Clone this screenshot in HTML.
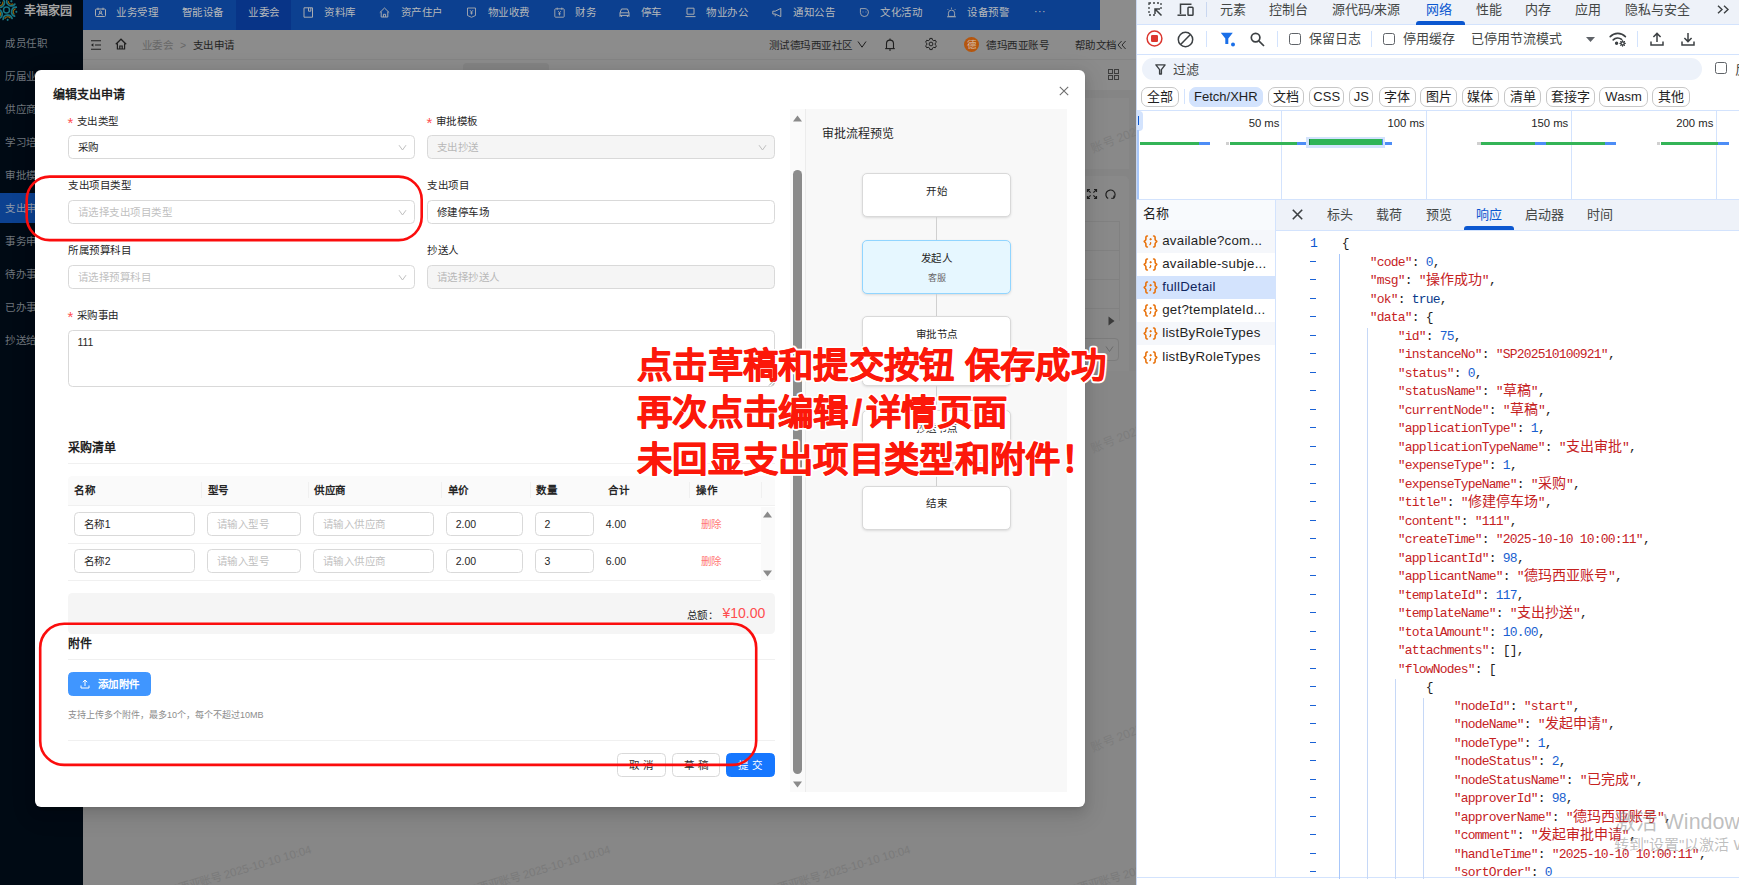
<!DOCTYPE html>
<html lang="zh-CN">
<head>
<meta charset="utf-8">
<title>编辑支出申请</title>
<style>
*{box-sizing:border-box;margin:0;padding:0}
html,body{width:1739px;height:885px;overflow:hidden;background:#878787}
body{position:relative;font-family:"Liberation Sans",sans-serif;font-size:10.5px;color:#262626;line-height:1;letter-spacing:.5px}
.a{position:absolute;white-space:nowrap}
svg{position:absolute;overflow:visible}
/* ---------- page (dimmed by modal mask) ---------- */
#page{position:absolute;left:0;top:0;width:1136px;height:885px;background:#858585;overflow:hidden}
#side{position:absolute;left:0;top:0;width:83px;height:885px;background:#000a14}
#side .mi{position:absolute;left:5px;font-size:10.5px;font-weight:500;color:#8e9398;white-space:nowrap}
#side .act{position:absolute;left:0;top:193px;width:83px;height:30px;background:#0c4190}
#nav{position:absolute;left:83px;top:0;width:1017px;height:30px;background:#0c4090}
#nav .act{position:absolute;left:153px;top:0;width:55px;height:30px;background:#083487}
#nav .t{position:absolute;top:6px;font-size:10.5px;font-weight:500;color:#b6b8ba;white-space:nowrap;line-height:12px}
#crumb{position:absolute;left:83px;top:30px;width:1053px;height:29px;background:#8c8c8c}
#tabs{position:absolute;left:83px;top:60px;width:1053px;height:30px;background:#8b8b8b}
.wm2{position:absolute;white-space:nowrap;font-size:11.5px;letter-spacing:0;color:#7a7a7a;transform:rotate(-16.7deg);transform-origin:right center;line-height:14px}
.wm{position:absolute;letter-spacing:0;white-space:nowrap;font-size:12px;color:#7d7d7d;transform:rotate(-22deg);transform-origin:left center}
/* ---------- modal ---------- */
#modal{position:absolute;left:35px;top:70px;width:1050px;height:737px;background:#fff;border-radius:6px;box-shadow:0 4.5px 12px rgba(0,0,0,.11),0 2.25px 4.5px -3px rgba(0,0,0,.16),0 6.75px 21px 6px rgba(0,0,0,.07)}

#modal .lb{position:absolute;white-space:nowrap;line-height:12px;color:#262626}
#modal .rq{position:absolute;white-space:nowrap;line-height:12px;color:#ff4d4f;font-size:15px;letter-spacing:0;margin-top:1px;margin-left:-0.5px}
.inp{position:absolute;height:24px;border:1px solid #d9d9d9;border-radius:4.5px;background:#fff;white-space:nowrap;line-height:22px;padding-left:8.5px;color:#262626}
.inp.dis{background:#f5f5f5;color:#b8b8b8}
.inp.ph{color:#bfbfbf}
.chev{position:absolute;right:7.5px;top:7px}
.n{letter-spacing:0}
.hr{position:absolute;height:1px;background:#f0f0f0}
.th{position:absolute;top:-1px;line-height:30px;font-weight:bold;color:#262626;white-space:nowrap}
.vs{position:absolute;top:6px;width:1px;height:16px;background:#f0f0f0}
.btn{position:absolute;height:24px;border:1px solid #d9d9d9;border-radius:4.5px;background:#fff;line-height:22px;text-align:center;white-space:nowrap;color:#262626}
.node{position:absolute;left:55.5px;width:149.5px;background:#fff;border:1px solid #d9d9d9;border-radius:5px;text-align:center;box-shadow:0 1px 2.5px rgba(0,0,0,.12);white-space:nowrap}
.conn{position:absolute;left:129.5px;width:1px;background:#d0d0d0}

/* ---------- devtools ---------- */
#dev{position:absolute;left:1136px;top:0;width:603px;height:885px;background:#fff;overflow:hidden;font-size:13px;letter-spacing:0;color:#1f1f1f;border-left:1px solid #c9d7f0}
#dev .t{position:absolute;white-space:nowrap;line-height:16px;color:#444746}
#dev .hl{position:absolute;left:0;width:603px;height:1px;background:#d3e3fd}
#dev .sep{position:absolute;width:1px;height:16px;background:#d3e3fd}
#dev .cb{position:absolute;width:12px;height:12px;border:1px solid #5f6368;border-radius:2.5px;background:#fff}
#dev .pill{position:absolute;top:86.5px;height:20px;border:1px solid #c7c7c7;border-radius:7px;line-height:18px;text-align:center;white-space:nowrap;color:#1f1f1f;background:#fff}
#dev .gl{position:absolute;margin-left:-0.5px;top:111px;width:1px;height:88px;background:#d3e3fd}
#dev .ms{position:absolute;top:115.5px;font-size:11.3px;line-height:15px;white-space:nowrap;text-align:right;width:60px;color:#1f1f1f}
#dev .g{position:absolute;top:142px;height:2.6px;background:#34b457}
#dev .bl{position:absolute;top:142px;height:2.6px;background:#4d8df6}
#dev .gr{position:absolute;top:142px;height:2.6px;background:#d0d0d0}
#dev .row{position:absolute;left:0;width:138px;height:23px}
#dev .row .nm{position:absolute;left:25.2px;top:3px;line-height:16px;font-size:13.3px;letter-spacing:.25px;color:#1f1f1f;white-space:nowrap}
#code{position:absolute;left:140px;top:231.2px;width:463px;height:648px;font-family:"Liberation Mono",monospace;font-size:13px;letter-spacing:-0.8px}
#code .l{position:absolute;white-space:pre;line-height:18.5px;height:18.5px;color:#1f1f1f;margin-left:-1.2px;margin-top:1px}
#code .ln{position:absolute;margin-top:1px;left:33px;color:#0b57d0;white-space:pre;line-height:18.5px}
#code .ds{position:absolute;left:33.2px;width:6px;height:1px;background:#1a62d6}
#code .k{color:#c5221f}
#code .nu{color:#1a5fd0}
#code .bo{color:#0a3a8c}
#code .c{font-size:14px;letter-spacing:0;line-height:0;font-family:"Liberation Mono",monospace}
#code .gd{position:absolute;width:1px;background:#c6d8f7}
</style>
</head>
<body>
<div id="page">
  <div id="side"><div class="act"></div>
<svg style="left:0;top:0" width="30" height="24" viewBox="0 0 30 24" fill="none" stroke-linecap="round"><g transform="translate(6.5,9.9)"><g transform="rotate(83)"><path d="M9.1,4.53A4.6,4.6 0 0 1 9.1,-4.53" stroke="#187582" stroke-width="1.7"/><path d="M8.3,2.6A3.1,3.1 0 0 1 8.3,-2.6" stroke="#93680c" stroke-width="1.1"/><circle cx="10" cy="0" r="1.05" fill="#187582"/></g><g transform="rotate(11)"><path d="M9.1,4.53A4.6,4.6 0 0 1 9.1,-4.53" stroke="#187582" stroke-width="1.7"/><path d="M8.3,2.6A3.1,3.1 0 0 1 8.3,-2.6" stroke="#93680c" stroke-width="1.1"/><circle cx="10" cy="0" r="1.05" fill="#187582"/></g><g transform="rotate(-61)"><path d="M9.1,4.53A4.6,4.6 0 0 1 9.1,-4.53" stroke="#187582" stroke-width="1.7"/><path d="M8.3,2.6A3.1,3.1 0 0 1 8.3,-2.6" stroke="#93680c" stroke-width="1.1"/><circle cx="10" cy="0" r="1.05" fill="#187582"/></g><g transform="rotate(-133)"><path d="M9.1,4.53A4.6,4.6 0 0 1 9.1,-4.53" stroke="#187582" stroke-width="1.7"/><path d="M8.3,2.6A3.1,3.1 0 0 1 8.3,-2.6" stroke="#93680c" stroke-width="1.1"/><circle cx="10" cy="0" r="1.05" fill="#187582"/></g><g transform="rotate(155)"><path d="M9.1,4.53A4.6,4.6 0 0 1 9.1,-4.53" stroke="#187582" stroke-width="1.7"/><path d="M8.3,2.6A3.1,3.1 0 0 1 8.3,-2.6" stroke="#93680c" stroke-width="1.1"/><circle cx="10" cy="0" r="1.05" fill="#187582"/></g><circle r="3" stroke="#187582" stroke-width="1.5"/></g></svg>
<div class="a" style="left:24px;top:4.5px;font-size:12px;line-height:13px;font-weight:bold;color:#a2a2a2;letter-spacing:0">幸福家园</div>
<div class="mi" style="top:37px;line-height:12px;color:#70767d">成员任职</div>
<div class="mi" style="top:70px;line-height:12px;color:#70767d">历届业委会</div>
<div class="mi" style="top:103px;line-height:12px;color:#70767d">供应商管理</div>
<div class="mi" style="top:136px;line-height:12px;color:#70767d">学习培训</div>
<div class="mi" style="top:169px;line-height:12px;color:#70767d">审批模板</div>
<div class="mi" style="top:202px;line-height:12px;color:#8f9aab">支出申请</div>
<div class="mi" style="top:235px;line-height:12px;color:#70767d">事务申请</div>
<div class="mi" style="top:268px;line-height:12px;color:#70767d">待办事项</div>
<div class="mi" style="top:301px;line-height:12px;color:#70767d">已办事项</div>
<div class="mi" style="top:334px;line-height:12px;color:#70767d">抄送给我</div></div>
  <div id="nav"><div class="act"></div>
<svg style="left:12.0px;top:7.0px" width="11" height="11" viewBox="0 0 11 11" fill="none" stroke="#a9acb0" stroke-width="1"><rect x="0.5" y="2" width="10" height="7.5" rx="1"/><path d="M3,0.7V3M8,0.7V3"/><circle cx="5.5" cy="5" r="1.1"/><path d="M3.6,8.2a1.9,1.9 0 0 1 3.8,0"/></svg>
<div class="t" style="left:33.25px">业务受理</div>
<div class="t" style="left:98.75px">智能设备</div>
<div class="t" style="left:165px">业委会</div>
<svg style="left:219.5px;top:6.5px" width="11" height="11" viewBox="0 0 11 11" fill="none" stroke="#a9acb0" stroke-width="1"><path d="M1,0.8H9.5V10.2H1Z"/><path d="M5.5,0.8V4.2H7.8V0.8"/></svg>
<div class="t" style="left:241.25px">资料库</div>
<svg style="left:296.25px;top:6.8px" width="11" height="11" viewBox="0 0 11 11" fill="none" stroke="#a9acb0" stroke-width="1"><path d="M0.8,5.6L5.5,1L10.2,5.6"/><path d="M2.2,4.6V10H8.8V4.6"/><path d="M4.4,10V7.3H6.6V10"/></svg>
<div class="t" style="left:317.5px">资产住户</div>
<svg style="left:382.75px;top:6.8px" width="11" height="11" viewBox="0 0 11 11" fill="none" stroke="#a9acb0" stroke-width="0.9"><path d="M1.5,1H9.5V8.5L5.5,10.3L1.5,8.5Z"/><path d="M4,3.2L5.5,5L7,3.2M5.5,5V7.5M4.2,6H6.8"/></svg>
<div class="t" style="left:404.5px">物业收费</div>
<svg style="left:470.5px;top:6.8px" width="11" height="11" viewBox="0 0 11 11" fill="none" stroke="#a9acb0" stroke-width="0.9"><rect x="0.8" y="1.8" width="9.4" height="8.4" rx="0.8"/><path d="M3.2,0.6V2.8M7.8,0.6V2.8"/><path d="M4.2,4.2L5.5,5.8L6.8,4.2M5.5,5.8V8.4M4.3,6.8H6.7"/></svg>
<div class="t" style="left:492px">财务</div>
<svg style="left:536.0px;top:6.8px" width="11" height="11" viewBox="0 0 11 11" fill="none" stroke="#a9acb0" stroke-width="1"><path d="M1,9.8V5.8L2.5,2H8.5L10,5.8V9.8"/><path d="M1,5.8H10M1,8.4H10"/><path d="M2.6,8.4V10M8.4,8.4V10"/></svg>
<div class="t" style="left:557.5px">停车</div>
<svg style="left:602.0px;top:6.8px" width="11" height="11" viewBox="0 0 11 11" fill="none" stroke="#a9acb0" stroke-width="1"><path d="M2,1.2H9V7.2H2Z"/><path d="M0.5,9.6H10.5"/></svg>
<div class="t" style="left:623.25px">物业办公</div>
<svg style="left:688.5px;top:6.8px" width="11" height="11" viewBox="0 0 11 11" fill="none" stroke="#a9acb0" stroke-width="1"><path d="M0.8,4.2H3.2L8.8,1.4V9.6L3.2,7H0.8Z"/><path d="M3.2,7.2V9.4"/></svg>
<div class="t" style="left:710px">通知公告</div>
<svg style="left:775.75px;top:6.8px" width="11" height="11" viewBox="0 0 11 11" fill="none" stroke="#a9acb0" stroke-width="0.9"><path d="M1.4,1.6H6a4,4 0 1 1 -4.6,4Z"/><path d="M4,4.6V5.4M7,4.6V5.4"/></svg>
<div class="t" style="left:797px">文化活动</div>
<svg style="left:862.5px;top:6.8px" width="11" height="11" viewBox="0 0 11 11" fill="none" stroke="#a9acb0" stroke-width="0.9"><path d="M2.4,9.4V6.2a3.1,3.1 0 0 1 6.2,0V9.4Z"/><path d="M1,9.8H10"/><path d="M5.5,0.6V1.8M1.6,2.2L2.5,3.1M9.4,2.2L8.5,3.1"/></svg>
<div class="t" style="left:884px">设备预警</div>
<div class="t" style="left:951px;top:5px;letter-spacing:0.5px">···</div></div>
  <div class="a" style="left:1100px;top:0;width:36px;height:30px;background:#8c8c8c"></div>
<div id="crumb"><svg style="left:7.0px;top:8.5px" width="12" height="12" viewBox="0 0 12 12" fill="none" stroke="#1f1f1f" stroke-width="1.1"><path d="M1,1.8H11M5,6H11M1,10.2H11"/><path d="M3.4,4.2L1,6L3.4,7.8Z" fill="#1f1f1f" stroke="none"/></svg>
<svg style="left:32.0px;top:8.2px" width="12" height="12" viewBox="0 0 12 12" fill="none" stroke="#1f1f1f" stroke-width="1.2"><path d="M0.8,6.2L6,1.2L11.2,6.2"/><path d="M2.4,5.2V11H9.6V5.2"/><path d="M4.8,11V8H7.2V11"/></svg>
<div class="a" style="left:58.75px;top:8.5px;line-height:12px;color:#676767">业委会</div>
<div class="a" style="left:97px;top:8.5px;line-height:12px;color:#676767">&gt;</div>
<div class="a" style="left:109.5px;top:8.5px;line-height:12px;color:#1f1f1f">支出申请</div>
<div class="a" style="left:685.75px;top:8.5px;line-height:12px;color:#262626">测试德玛西亚社区</div>
<svg style="left:773.5px;top:9.2px" width="10" height="10" viewBox="0 0 10 10" fill="none" stroke="#1f1f1f" stroke-width="1"><path d="M1,2.5L5,8.2L9,2.5"/></svg>
<svg style="left:801px;top:7.600000000000001px" width="12" height="13" viewBox="0 0 12 13" fill="none" stroke="#1f1f1f" stroke-width="1.1"><path d="M2.5,10.4V5.6a3.5,3.5 0 0 1 7,0V10.4"/><path d="M1.2,10.6H10.8"/><path d="M5,12H7"/><path d="M6,0.6V2.1"/></svg>
<svg style="left:842.4px;top:8.100000000000001px" width="12" height="12" viewBox="0 0 12 12" fill="none" stroke="#1f1f1f" stroke-width="1"><path d="M11.40,7.81L10.27,9.77L8.79,9.27L7.43,10.05L7.13,11.59L4.87,11.59L4.57,10.05L3.21,9.27L1.73,9.77L0.60,7.81L1.77,6.79L1.77,5.21L0.60,4.19L1.73,2.23L3.21,2.73L4.57,1.95L4.87,0.41L7.13,0.41L7.43,1.95L8.79,2.73L10.27,2.23L11.40,4.19L10.23,5.21L10.23,6.79Z" stroke-linejoin="round"/><circle cx="6" cy="6" r="1.9"/></svg>
<div class="a" style="left:881px;top:7px;width:15px;height:15px;border-radius:50%;background:#b5560e"></div>
<div class="a" style="left:883.8px;top:9.8px;font-size:9.5px;line-height:10px;letter-spacing:0;color:#d6bfaa">德</div>
<div class="a" style="left:903.25px;top:8.5px;line-height:12px;color:#262626">德玛西亚账号</div>
<div class="a" style="left:991.5px;top:8.5px;line-height:12px;color:#262626">帮助文档</div>
<svg style="left:1034.0px;top:9.5px" width="10" height="10" viewBox="0 0 10 10" fill="none" stroke="#1f1f1f" stroke-width="0.9"><path d="M4.6,1L1,5L4.6,9M8.6,1L5,5L8.6,9"/></svg></div>
  <div id="tabs"></div>
<div class="a" style="left:83px;top:59px;width:1053px;height:1px;background:#848484"></div>
<div class="a" style="left:463px;top:63px;width:86px;height:24px;background:#838383;border-radius:4px 4px 0 0"></div>
<svg style="left:1108px;top:69px" width="11" height="11" viewBox="0 0 11 11" fill="none" stroke="#3c3c3c" stroke-width="1"><rect x="0.5" y="0.5" width="4" height="4"/><rect x="6.5" y="0.5" width="4" height="4"/><rect x="0.5" y="6.5" width="4" height="4"/><rect x="6.5" y="6.5" width="4" height="4"/></svg>
<div class="a" style="left:92px;top:98px;width:1037px;height:71px;background:#898989"></div>
<div class="a" style="left:92px;top:176px;width:1037px;height:620px;background:#898989;border-radius:5px"></div>

<svg style="left:1087px;top:189px" width="10" height="10" viewBox="0 0 10 10" fill="none" stroke="#1f1f1f" stroke-width="1.2"><path d="M0.5,3V0.5H3M7,0.5H9.5V3M9.5,7V9.5H7M3,9.5H0.5V7M0.8,0.8L3.6,3.6M9.2,0.8L6.4,3.6M9.2,9.2L6.4,6.4M0.8,9.2L3.6,6.4"/></svg>
<svg style="left:1104.5px;top:188.5px" width="11" height="11" viewBox="0 0 11 11" fill="none" stroke="#1f1f1f" stroke-width="1.2"><path d="M3.2,9.6A4.6,4.6 0 1 1 8.6,9"/><path d="M8.9,6.6V9.3H6.2" stroke-width="1"/></svg>
<div class="a" style="left:100px;top:220.5px;width:1020px;height:100px;border:1px solid #818181;border-bottom:none"></div>
<div class="a" style="left:100px;top:249.5px;width:1020px;height:1px;background:#818181"></div>
<div class="a" style="left:100px;top:279px;width:1020px;height:1px;background:#818181"></div>
<div class="a" style="left:100px;top:308px;width:1020px;height:1px;background:#818181"></div>
<svg style="left:1108px;top:316px" width="7" height="10" viewBox="0 0 7 10"><path d="M0.5,0.5L6.5,5L0.5,9.5Z" fill="#3a3a3a"/></svg>
<div class="a" style="left:1040px;top:337.5px;width:79px;height:23px;border:1px solid #7c7c7c;border-radius:4px;background:#8a8a8a"></div>
<svg style="left:1105px;top:345px" width="9" height="8" viewBox="0 0 9 8" fill="none" stroke="#6c6c6c" stroke-width="1"><path d="M1,1.5L4.5,6.5L8,1.5"/></svg>
<div class="a" style="left:83px;top:371px;width:1053px;height:520px;background:#878787"></div>
<div class="wm" style="left:1092px;top:143px">账号 2025-10-10</div>
<div class="wm" style="left:1092px;top:443px">账号 2025-10-10</div>
<div class="wm" style="left:1092px;top:742px">账号 2025-10-10</div>
<div class="wm2" style="right:825px;top:842px">玛西亚账号 2025-10-10 10:04</div>
<div class="wm2" style="right:526px;top:842px">玛西亚账号 2025-10-10 10:04</div>
<div class="wm2" style="right:226px;top:842px">玛西亚账号 2025-10-10 10:04</div>
<div class="wm2" style="right:-74px;top:842px">玛西亚账号 2025-10-10 10:04</div>
</div>
<div id="modal">
<div class="a" style="left:18px;top:18px;font-size:12px;line-height:14px;font-weight:bold;color:#1f1f1f;letter-spacing:0">编辑支出申请</div>
<svg style="left:1024px;top:15.9px" width="10" height="10" viewBox="0 0 10 10" stroke="#6e6e6e" stroke-width="1.1" fill="none"><path d="M0.8,0.8L9.2,9.2M9.2,0.8L0.8,9.2"/></svg>
<div class="rq" style="left:33px;top:46px">*</div>
<div class="lb" style="left:41.75px;top:45px">支出类型</div>
<div class="rq" style="left:392px;top:46px">*</div>
<div class="lb" style="left:400.75px;top:45px">审批模板</div>
<div class="inp " style="left:33px;top:65px;width:347px;height:24px;">采购<svg class="chev" width="9" height="9" viewBox="0 0 9 9" fill="none" stroke="#bfbfbf" stroke-width="1"><path d="M1,2.2L4.5,7L8,2.2"/></svg></div>
<div class="inp dis" style="left:392px;top:65px;width:348px;height:24px;">支出抄送<svg class="chev" width="9" height="9" viewBox="0 0 9 9" fill="none" stroke="#bfbfbf" stroke-width="1"><path d="M1,2.2L4.5,7L8,2.2"/></svg></div>
<div class="lb" style="left:33px;top:109px">支出项目类型</div>
<div class="lb" style="left:392px;top:109px">支出项目</div>
<div class="inp ph" style="left:33px;top:130px;width:347px;height:24px;">请选择支出项目类型<svg class="chev" width="9" height="9" viewBox="0 0 9 9" fill="none" stroke="#bfbfbf" stroke-width="1"><path d="M1,2.2L4.5,7L8,2.2"/></svg></div>
<div class="inp " style="left:392px;top:130px;width:348px;height:24px;">修建停车场</div>
<div class="lb" style="left:33px;top:174px">所属预算科目</div>
<div class="lb" style="left:392px;top:174px">抄送人</div>
<div class="inp ph" style="left:33px;top:195px;width:347px;height:24px;">请选择预算科目<svg class="chev" width="9" height="9" viewBox="0 0 9 9" fill="none" stroke="#bfbfbf" stroke-width="1"><path d="M1,2.2L4.5,7L8,2.2"/></svg></div>
<div class="inp dis" style="left:392px;top:195px;width:348px;height:24px;">请选择抄送人</div>
<div class="rq" style="left:33px;top:240px">*</div>
<div class="lb" style="left:41.75px;top:239px">采购事由</div>
<div class="inp " style="left:33px;top:260px;width:707px;height:57px;"><span class="n">111</span></div>
<div class="a" style="left:33px;top:370.5px;font-size:12px;line-height:14px;color:#1f1f1f;letter-spacing:0;font-weight:600">采购清单</div>
<div class="hr" style="left:33px;top:393px;width:707px"></div>
<div class="a" style="left:33px;top:406px;width:707px;height:104px"><div class="a" style="left:0;top:0;width:707px;height:29px;background:#fafafa;border-radius:4.5px 4.5px 0 0"></div><div class="th" style="left:6.25px">名称</div><div class="th" style="left:139.5px">型号</div><div class="th" style="left:246.25px">供应商</div><div class="th" style="left:379.5px">单价</div><div class="th" style="left:468.25px">数量</div><div class="th" style="left:540px">合计</div><div class="th" style="left:628.25px">操作</div><div class="vs" style="left:132.5px"></div><div class="vs" style="left:239.5px"></div><div class="vs" style="left:372.5px"></div><div class="vs" style="left:461.5px"></div><div class="vs" style="left:621.25px"></div><div class="vs" style="left:693.25px"></div><div class="hr" style="left:0;top:29px;width:707px"></div><div class="a" style="left:692.5px;top:30.5px;width:14.5px;height:73.5px;background:#fafafa"></div><div class="inp " style="left:6.25px;top:36px;width:120.5px">名称<span class="n">1</span></div><div class="inp ph" style="left:139px;top:36px;width:93.5px">请输入型号</div><div class="inp ph" style="left:245px;top:36px;width:120.5px">请输入供应商</div><div class="inp " style="left:378.25px;top:36px;width:76.5px"><span class="n">2.00</span></div><div class="inp " style="left:467px;top:36px;width:59px"><span class="n">2</span></div><div class="a n" style="left:537.75px;top:42px;line-height:12px">4.00</div><div class="a" style="left:632.75px;top:42px;line-height:12px;color:#ff7875">删除</div><div class="hr" style="left:0;top:66.5px;width:692.5px"></div><div class="inp " style="left:6.25px;top:73px;width:120.5px">名称<span class="n">2</span></div><div class="inp ph" style="left:139px;top:73px;width:93.5px">请输入型号</div><div class="inp ph" style="left:245px;top:73px;width:120.5px">请输入供应商</div><div class="inp " style="left:378.25px;top:73px;width:76.5px"><span class="n">2.00</span></div><div class="inp " style="left:467px;top:73px;width:59px"><span class="n">3</span></div><div class="a n" style="left:537.75px;top:79px;line-height:12px">6.00</div><div class="a" style="left:632.75px;top:79px;line-height:12px;color:#ff7875">删除</div><div class="hr" style="left:0;top:103.5px;width:692.5px"></div><svg style="left:694.75px;top:35.0px" width="9" height="7" viewBox="0 0 9 7"><path d="M4.5,0.5L9,6.5H0Z" fill="#8a8a8a"/></svg><svg style="left:694.75px;top:93.75px" width="9" height="7" viewBox="0 0 9 7"><path d="M4.5,6.5L9,0.5H0Z" fill="#8a8a8a"/></svg></div>
<div class="a" style="left:33px;top:523px;width:707px;height:40.5px;background:#f5f5f5;border-radius:4.5px"></div>
<div class="a" style="left:651.75px;top:538.5px;line-height:12px">总额：</div>
<div class="a n" style="left:687.5px;top:536px;font-size:14px;line-height:15px;color:#ff4d4f">¥10.00</div>
<div class="a" style="left:33px;top:566.5px;font-size:12px;line-height:14px;color:#1f1f1f;letter-spacing:0;font-weight:600">附件</div>
<div class="hr" style="left:33px;top:589px;width:707px"></div>
<div class="btn" style="left:33px;top:602px;width:83px;background:#4096ff;border-color:#4096ff;color:#fff;text-align:left;padding-left:28.5px;font-weight:bold">添加附件<svg style="left:11px;top:6px" width="10" height="10" viewBox="0 0 10 10" fill="none" stroke="#fff" stroke-width="1"><path d="M5,7V1.2M2.8,3.2L5,1L7.2,3.2M1,6.5V9H9V6.5"/></svg></div>
<div class="a" style="left:33px;top:640px;font-size:9px;line-height:11px;color:#8c8c8c;letter-spacing:0">支持上传多个附件，最多<span class="n">10</span>个，每个不超过<span class="n">10MB</span></div>
<div class="hr" style="left:33px;top:670px;width:707px"></div>
<div class="btn" style="left:582px;top:683px;width:49px">取 消</div>
<div class="btn" style="left:637px;top:683px;width:48px">草 稿</div>
<div class="btn" style="left:690.75px;top:683px;width:49.25px;background:#1677ff;border-color:#1677ff;color:#fff">提 交</div>
<div class="a" style="left:755px;top:39px;width:15px;height:682.5px;background:#fafafa"></div>
<svg style="left:757.9px;top:44.5px" width="9" height="7" viewBox="0 0 9 7"><path d="M4.5,0.5L9,6.5H0Z" fill="#8a8a8a"/></svg>
<svg style="left:757.9px;top:710.75px" width="9" height="7" viewBox="0 0 9 7"><path d="M4.5,6.5L9,0.5H0Z" fill="#8a8a8a"/></svg>
<div class="a" style="left:758px;top:100px;width:9px;height:604px;background:#8b8b8b;border-radius:4.5px"></div>
<div class="a" style="left:770px;top:39px;width:262px;height:682.5px;background:#f8f8f8;border-left:1px solid #ececec"><div class="a" style="left:16px;top:17.5px;font-size:12px;line-height:14px;color:#262626;letter-spacing:0">审批流程预览</div><div class="node" style="top:64.3px;height:44.1px;"><div class="a" style="left:0;width:148px;text-align:center;top:10.9px;line-height:12px;font-size:10.5px;color:#262626;">开始</div></div><div class="conn" style="top:108.4px;height:23px"></div><div class="node" style="top:131.4px;height:53.2px;background:#e6f7ff;border-color:#91d5ff;"><div class="a" style="left:0;width:148px;text-align:center;top:10.6px;line-height:12px;font-size:10.5px;color:#262626;">发起人</div><div class="a" style="left:0;width:148px;text-align:center;top:30.6px;line-height:12px;font-size:9px;color:#666;letter-spacing:0;">客服</div></div><div class="conn" style="top:184.6px;height:23px"></div><div class="node" style="top:207.2px;height:69.4px;"><div class="a" style="left:0;width:148px;text-align:center;top:10.6px;line-height:12px;font-size:10.5px;color:#262626;">审批节点</div></div><div class="conn" style="top:276.6px;height:24px"></div><div class="node" style="top:300.6px;height:53.4px;"><div class="a" style="left:0;width:148px;text-align:center;top:11.8px;line-height:12px;font-size:10.5px;color:#262626;">抄送节点</div></div><div class="conn" style="top:354px;height:23px"></div><div class="node" style="top:376.5px;height:44.2px;"><div class="a" style="left:0;width:148px;text-align:center;top:10.6px;line-height:12px;font-size:10.5px;color:#262626;">结束</div></div></div>
</div>
<svg id="anno" style="left:0;top:0" width="1739" height="885" viewBox="0 0 1739 885">
<rect x="26.7" y="176.6" width="395" height="63.5" rx="23" ry="23" fill="none" stroke="#fb0d0d" stroke-width="2.6"/>
<rect x="40.2" y="623.7" width="716" height="141.2" rx="24" ry="24" fill="none" stroke="#fb0d0d" stroke-width="2.6"/>
<g font-family="'Liberation Sans',sans-serif" font-weight="bold" font-size="35.4" letter-spacing="0.3" stroke-linejoin="round">
<g fill="#fff" stroke="#fff" stroke-width="4.4"><text x="637" y="378.4">点击草稿和提交按钮 保存成功</text><text x="637" y="425.4">再次点击编辑<tspan dx="3.5">/</tspan><tspan dx="3.5">详情页面</tspan></text><text x="637" y="472.4">未回显支出项目类型和附件！</text></g>
<g fill="#fc180a" stroke="#fc180a" stroke-width="0.8"><text x="637" y="378.4">点击草稿和提交按钮 保存成功</text><text x="637" y="425.4">再次点击编辑<tspan dx="3.5">/</tspan><tspan dx="3.5">详情页面</tspan></text><text x="637" y="472.4">未回显支出项目类型和附件！</text></g>
</g>
</svg>
<svg style="left:768px;top:379px" width="7" height="7" viewBox="0 0 7 7" stroke="#8a8a8a" stroke-width="0.8" fill="none"><path d="M6.5,1L1,6.5M6.5,4L4,6.5"/></svg>
<div id="dev">
<div class="a" style="left:0;top:0;width:603px;height:24px;background:#eef2f9"></div>
<div class="hl" style="top:24px"></div>
<svg style="left:10.5px;top:1.5px" width="15" height="15" viewBox="0 0 15 15" fill="none" stroke="#3c4043" stroke-width="1.4"><path d="M1,3V1H3M5,1H7M9,1H11M13,1V3M13,5V7M1,5V7M1,9V11M1,13H3M5,13H7" stroke-width="1.3"/><path d="M13.5,13.5L7,7M7,12V7H12" stroke-width="1.5"/></svg>
<svg style="left:40px;top:1.5px" width="17" height="15" viewBox="0 0 17 15" fill="none" stroke="#3c4043" stroke-width="1.5"><path d="M3.5,12V2.2H14.5"/><path d="M0.5,13.2H9"/><rect x="11" y="5.2" width="5" height="8" rx="0.8"/></svg>
<div class="sep" style="left:68.5px;top:2px;height:15px;background:#c9d7f0"></div>
<div class="t" style="left:82.6px;top:1.5px">元素</div>
<div class="t" style="left:131.9px;top:1.5px">控制台</div>
<div class="t" style="left:194.8px;top:1.5px">源代码/来源</div>
<div class="t" style="left:289.2px;top:1.5px;color:#0b57d0">网络</div>
<div class="t" style="left:339px;top:1.5px">性能</div>
<div class="t" style="left:388.4px;top:1.5px">内存</div>
<div class="t" style="left:437.9px;top:1.5px">应用</div>
<div class="t" style="left:487.7px;top:1.5px">隐私与安全</div>
<div class="a" style="left:278.7px;top:21px;width:49px;height:3.5px;background:#0b57d0;border-radius:3px 3px 0 0"></div>
<svg style="left:579.5px;top:4.5px" width="12" height="9" viewBox="0 0 12 9" fill="none" stroke="#3c4043" stroke-width="1.4"><path d="M1,0.7L5,4.5L1,8.3M7,0.7L11,4.5L7,8.3"/></svg>
<div class="hl" style="top:54px"></div>
<svg style="left:9.4px;top:30.3px" width="17" height="17" viewBox="0 0 17 17"><circle cx="8.5" cy="8.5" r="7.4" fill="none" stroke="#dc362e" stroke-width="1.5"/><rect x="5" y="5" width="7" height="7" rx="1.2" fill="#dc362e"/></svg>
<svg style="left:39.7px;top:30.5px" width="17" height="17" viewBox="0 0 17 17" fill="none" stroke="#3c4043" stroke-width="1.5"><circle cx="8.5" cy="8.5" r="7.2"/><path d="M3.6,13.6L13.4,3.4"/></svg>
<div class="sep" style="left:68.5px;top:31px"></div>
<svg style="left:82.5px;top:32px" width="17" height="15" viewBox="0 0 17 15"><path d="M0.8,0.8H12.8L8.3,6.6V12H5.3V6.6Z" fill="#1a6fe8"/><circle cx="13" cy="12.6" r="2" fill="#1a6fe8"/></svg>
<svg style="left:112.5px;top:32px" width="15" height="15" viewBox="0 0 15 15" fill="none" stroke="#3c4043" stroke-width="1.7"><circle cx="5.6" cy="5.6" r="4.3"/><path d="M8.8,8.8L14,14"/></svg>
<div class="sep" style="left:140.3px;top:31px"></div>
<div class="cb" style="left:152px;top:33px"></div>
<div class="t" style="left:172px;top:30.5px">保留日志</div>
<div class="sep" style="left:234px;top:31px"></div>
<div class="cb" style="left:245.5px;top:33px"></div>
<div class="t" style="left:266px;top:30.5px">停用缓存</div>
<div class="t" style="left:333.8px;top:30.5px">已停用节流模式</div>
<svg style="left:448.7px;top:36.5px" width="9" height="5" viewBox="0 0 9 5"><path d="M0,0H9L4.5,5Z" fill="#5f6368"/></svg>
<svg style="left:471.5px;top:30.5px" width="18" height="16" viewBox="0 0 18 16" fill="none" stroke="#3c4043" stroke-width="1.6" stroke-linecap="round"><path d="M1.2,5.6A10.5,10.5 0 0 1 16.4,5.6"/><path d="M4.2,8.9A6.4,6.4 0 0 1 12.6,8.4"/><circle cx="7.6" cy="12.2" r="0.9" fill="#3c4043"/><circle cx="13.6" cy="12.4" r="1.6" stroke-width="1.3"/><path d="M13.6,9.6V10.4M13.6,14.4V15.2M10.9,12.4H11.6M15.6,12.4H16.3M11.7,10.5L12.2,11M15,13.8L15.5,14.3M11.7,14.3L12.2,13.8M15,11L15.5,10.5" stroke-width="1.1"/></svg>
<div class="sep" style="left:499.6px;top:31px"></div>
<svg style="left:513px;top:32px" width="14" height="14" viewBox="0 0 14 14" fill="none" stroke="#3c4043" stroke-width="1.5"><path d="M7,10V1.5M3.4,5L7,1.4L10.6,5M1,9.6V13H13V9.6"/></svg>
<svg style="left:544px;top:32px" width="14" height="14" viewBox="0 0 14 14" fill="none" stroke="#3c4043" stroke-width="1.5"><path d="M7,1V9.5M3.4,6L7,9.6L10.6,6M1,9.6V13H13V9.6"/></svg>
<div class="a" style="left:5px;top:58px;width:560px;height:22px;border-radius:11px;background:#edf2fa"></div>
<svg style="left:17.5px;top:63.5px" width="11" height="11" viewBox="0 0 11 11" fill="none" stroke="#3c4043" stroke-width="1.4"><path d="M0.9,0.9H10.1L6.4,5.6V10H4.6V5.6Z" stroke-linejoin="round"/></svg>
<div class="t" style="left:36px;top:61.5px">过滤</div>
<div class="cb" style="left:577.7px;top:62px"></div>
<div class="t" style="left:597.8px;top:61.5px">反转</div>
<div class="pill" style="left:4.2px;width:37.6px;">全部</div>
<div class="pill" style="left:52px;width:73.7px;background:#d3e3fd;border-color:#d3e3fd;">Fetch/XHR</div>
<div class="pill" style="left:131.3px;width:35.9px;">文档</div>
<div class="pill" style="left:172px;width:35.4px;">CSS</div>
<div class="pill" style="left:212.3px;width:24.1px;">JS</div>
<div class="pill" style="left:241.5px;width:37.2px;">字体</div>
<div class="pill" style="left:283.4px;width:36.5px;">图片</div>
<div class="pill" style="left:325.1px;width:36.7px;">媒体</div>
<div class="pill" style="left:367.4px;width:36.4px;">清单</div>
<div class="pill" style="left:408.5px;width:49.5px;">套接字</div>
<div class="pill" style="left:462.3px;width:48.5px;">Wasm</div>
<div class="pill" style="left:515.3px;width:37.4px;">其他</div>
<div class="sep" style="left:46.5px;top:89px;height:15px"></div>
<div class="hl" style="top:110px"></div>
<div class="gl" style="left:144.5px"></div>
<div class="gl" style="left:289.6px"></div>
<div class="gl" style="left:434px"></div>
<div class="gl" style="left:579.5px"></div>
<div class="ms" style="left:82.4px">50 ms</div>
<div class="ms" style="left:227.5px">100 ms</div>
<div class="ms" style="left:371.2px">150 ms</div>
<div class="ms" style="left:516.3px">200 ms</div>
<div class="a" style="left:0;top:111px;width:5.5px;height:19.5px;background:#d3e3fd;border-radius:0 4px 4px 0"></div>
<div class="a" style="left:0.8px;top:116px;width:1.4px;height:9px;background:#0b57d0"></div>
<div class="a" style="left:0px;top:130px;width:1.5px;height:69px;background:#a8c7fa"></div>
<div class="g" style="left:2.8px;width:59.5px"></div>
<div class="bl" style="left:62.3px;width:11.0px"></div>
<div class="gr" style="left:89.4px;width:3.1px"></div>
<div class="g" style="left:92.5px;width:67.7px"></div>
<div class="bl" style="left:160.2px;width:8.8px"></div>
<div class="a" style="left:169px;top:137px;width:79px;height:10.5px;background:#d3e3fd"></div>
<div class="a" style="left:172px;top:138.7px;width:73.5px;height:6.3px;background:#2fb457;border-left:1.2px solid #1f7a4a;border-right:1.2px solid #4d8df6"></div>
<div class="bl" style="left:248.1px;width:7.0px"></div>
<div class="gr" style="left:340.3px;width:3.5px"></div>
<div class="g" style="left:343.8px;width:54.2px"></div>
<div class="bl" style="left:398px;width:11px"></div>
<div class="g" style="left:409px;width:59px"></div>
<div class="bl" style="left:468px;width:11px"></div>
<div class="gr" style="left:520.4px;width:3.1px"></div>
<div class="g" style="left:523.5px;width:57.4px"></div>
<div class="bl" style="left:580.9px;width:11.1px"></div>
<div class="hl" style="top:199px"></div>
<div class="a" style="left:0;top:200px;width:139px;height:29.5px;background:#f8fafd"></div>
<div class="a" style="left:139px;top:200px;width:464px;height:29.5px;background:#eef2f9"></div>
<div class="hl" style="top:229.5px"></div>
<div class="a" style="left:138px;top:200px;width:1px;height:685px;background:#d3e3fd"></div>
<div class="t" style="left:5.6px;top:205.5px;color:#1f1f1f">名称</div>
<svg style="left:155.4px;top:209px" width="11" height="11" viewBox="0 0 11 11" fill="none" stroke="#3c4043" stroke-width="1.6"><path d="M0.8,0.8L10.2,10.2M10.2,0.8L0.8,10.2"/></svg>
<div class="t" style="left:189.9px;top:207px">标头</div>
<div class="t" style="left:238.9px;top:207px">载荷</div>
<div class="t" style="left:289.2px;top:207px">预览</div>
<div class="t" style="left:338.6px;top:207px;color:#0b57d0">响应</div>
<div class="t" style="left:388px;top:207px">启动器</div>
<div class="t" style="left:450.4px;top:207px">时间</div>
<div class="a" style="left:327.4px;top:226px;width:49.3px;height:3.5px;background:#0b57d0;border-radius:3px 3px 0 0"></div>
<div class="row" style="top:230.0px;background:#f5f7fb"><svg style="left:6px;top:5px" width="15" height="13" viewBox="0 0 15 13" fill="none" stroke="#e8710a" stroke-width="1.6" stroke-linecap="round"><path d="M4.4,1C2.6,1 2.9,2.6 2.9,4.2C2.9,5.6 1.2,6 1.2,6.5C1.2,7 2.9,7.4 2.9,8.8C2.9,10.4 2.6,12 4.4,12"/><path d="M10.6,1C12.4,1 12.1,2.6 12.1,4.2C12.1,5.6 13.8,6 13.8,6.5C13.8,7 12.1,7.4 12.1,8.8C12.1,10.4 12.4,12 10.6,12"/><circle cx="7.5" cy="4.2" r="0.7" fill="#e8710a" stroke-width="0.8"/><path d="M7.6,7.6V8.6L6.9,9.6" stroke-width="1.3"/></svg><div class="nm">available?com...</div></div>
<div class="row" style="top:253.1px;background:#fff"><svg style="left:6px;top:5px" width="15" height="13" viewBox="0 0 15 13" fill="none" stroke="#e8710a" stroke-width="1.6" stroke-linecap="round"><path d="M4.4,1C2.6,1 2.9,2.6 2.9,4.2C2.9,5.6 1.2,6 1.2,6.5C1.2,7 2.9,7.4 2.9,8.8C2.9,10.4 2.6,12 4.4,12"/><path d="M10.6,1C12.4,1 12.1,2.6 12.1,4.2C12.1,5.6 13.8,6 13.8,6.5C13.8,7 12.1,7.4 12.1,8.8C12.1,10.4 12.4,12 10.6,12"/><circle cx="7.5" cy="4.2" r="0.7" fill="#e8710a" stroke-width="0.8"/><path d="M7.6,7.6V8.6L6.9,9.6" stroke-width="1.3"/></svg><div class="nm">available-subje...</div></div>
<div class="row" style="top:276.2px;background:#d3e3fd"><svg style="left:6px;top:5px" width="15" height="13" viewBox="0 0 15 13" fill="none" stroke="#e8710a" stroke-width="1.6" stroke-linecap="round"><path d="M4.4,1C2.6,1 2.9,2.6 2.9,4.2C2.9,5.6 1.2,6 1.2,6.5C1.2,7 2.9,7.4 2.9,8.8C2.9,10.4 2.6,12 4.4,12"/><path d="M10.6,1C12.4,1 12.1,2.6 12.1,4.2C12.1,5.6 13.8,6 13.8,6.5C13.8,7 12.1,7.4 12.1,8.8C12.1,10.4 12.4,12 10.6,12"/><circle cx="7.5" cy="4.2" r="0.7" fill="#e8710a" stroke-width="0.8"/><path d="M7.6,7.6V8.6L6.9,9.6" stroke-width="1.3"/></svg><div class="nm" style="color:#10265e">fullDetail</div></div>
<div class="row" style="top:299.3px;background:#fff"><svg style="left:6px;top:5px" width="15" height="13" viewBox="0 0 15 13" fill="none" stroke="#e8710a" stroke-width="1.6" stroke-linecap="round"><path d="M4.4,1C2.6,1 2.9,2.6 2.9,4.2C2.9,5.6 1.2,6 1.2,6.5C1.2,7 2.9,7.4 2.9,8.8C2.9,10.4 2.6,12 4.4,12"/><path d="M10.6,1C12.4,1 12.1,2.6 12.1,4.2C12.1,5.6 13.8,6 13.8,6.5C13.8,7 12.1,7.4 12.1,8.8C12.1,10.4 12.4,12 10.6,12"/><circle cx="7.5" cy="4.2" r="0.7" fill="#e8710a" stroke-width="0.8"/><path d="M7.6,7.6V8.6L6.9,9.6" stroke-width="1.3"/></svg><div class="nm">get?templateId...</div></div>
<div class="row" style="top:322.4px;background:#f5f7fb"><svg style="left:6px;top:5px" width="15" height="13" viewBox="0 0 15 13" fill="none" stroke="#e8710a" stroke-width="1.6" stroke-linecap="round"><path d="M4.4,1C2.6,1 2.9,2.6 2.9,4.2C2.9,5.6 1.2,6 1.2,6.5C1.2,7 2.9,7.4 2.9,8.8C2.9,10.4 2.6,12 4.4,12"/><path d="M10.6,1C12.4,1 12.1,2.6 12.1,4.2C12.1,5.6 13.8,6 13.8,6.5C13.8,7 12.1,7.4 12.1,8.8C12.1,10.4 12.4,12 10.6,12"/><circle cx="7.5" cy="4.2" r="0.7" fill="#e8710a" stroke-width="0.8"/><path d="M7.6,7.6V8.6L6.9,9.6" stroke-width="1.3"/></svg><div class="nm">listByRoleTypes</div></div>
<div class="row" style="top:345.5px;background:#fff"><svg style="left:6px;top:5px" width="15" height="13" viewBox="0 0 15 13" fill="none" stroke="#e8710a" stroke-width="1.6" stroke-linecap="round"><path d="M4.4,1C2.6,1 2.9,2.6 2.9,4.2C2.9,5.6 1.2,6 1.2,6.5C1.2,7 2.9,7.4 2.9,8.8C2.9,10.4 2.6,12 4.4,12"/><path d="M10.6,1C12.4,1 12.1,2.6 12.1,4.2C12.1,5.6 13.8,6 13.8,6.5C13.8,7 12.1,7.4 12.1,8.8C12.1,10.4 12.4,12 10.6,12"/><circle cx="7.5" cy="4.2" r="0.7" fill="#e8710a" stroke-width="0.8"/><path d="M7.6,7.6V8.6L6.9,9.6" stroke-width="1.3"/></svg><div class="nm">listByRoleTypes</div></div>
<div class="hl" style="top:876.7px"></div>
<div class="a" style="left:0;top:877.7px;width:603px;height:8px;background:#fff"></div>
<div id="code">
<div class="ln" style="top:3.25px">1</div><div class="l" style="left:66px;top:3.25px">{</div>
<div class="ds" style="top:29.8px"></div><div class="l" style="left:94px;top:21.75px"><span class="k">"code"</span>: <span class="nu">0</span>,</div>
<div class="ds" style="top:47.8px"></div><div class="l" style="left:94px;top:40.25px"><span class="k">"msg"</span>: <span class="k">"<span class="c">操作成功</span>"</span>,</div>
<div class="ds" style="top:66.8px"></div><div class="l" style="left:94px;top:58.75px"><span class="k">"ok"</span>: <span class="bo">true</span>,</div>
<div class="ds" style="top:84.8px"></div><div class="l" style="left:94px;top:77.25px"><span class="k">"data"</span>: {</div>
<div class="ds" style="top:103.8px"></div><div class="l" style="left:122px;top:95.75px"><span class="k">"id"</span>: <span class="nu">75</span>,</div>
<div class="ds" style="top:121.8px"></div><div class="l" style="left:122px;top:114.25px"><span class="k">"instanceNo"</span>: <span class="k">"SP202510100921"</span>,</div>
<div class="ds" style="top:140.8px"></div><div class="l" style="left:122px;top:132.75px"><span class="k">"status"</span>: <span class="nu">0</span>,</div>
<div class="ds" style="top:158.8px"></div><div class="l" style="left:122px;top:151.25px"><span class="k">"statusName"</span>: <span class="k">"<span class="c">草稿</span>"</span>,</div>
<div class="ds" style="top:177.8px"></div><div class="l" style="left:122px;top:169.75px"><span class="k">"currentNode"</span>: <span class="k">"<span class="c">草稿</span>"</span>,</div>
<div class="ds" style="top:195.8px"></div><div class="l" style="left:122px;top:188.25px"><span class="k">"applicationType"</span>: <span class="nu">1</span>,</div>
<div class="ds" style="top:214.8px"></div><div class="l" style="left:122px;top:206.75px"><span class="k">"applicationTypeName"</span>: <span class="k">"<span class="c">支出审批</span>"</span>,</div>
<div class="ds" style="top:232.8px"></div><div class="l" style="left:122px;top:225.25px"><span class="k">"expenseType"</span>: <span class="nu">1</span>,</div>
<div class="ds" style="top:251.8px"></div><div class="l" style="left:122px;top:243.75px"><span class="k">"expenseTypeName"</span>: <span class="k">"<span class="c">采购</span>"</span>,</div>
<div class="ds" style="top:269.8px"></div><div class="l" style="left:122px;top:262.25px"><span class="k">"title"</span>: <span class="k">"<span class="c">修建停车场</span>"</span>,</div>
<div class="ds" style="top:288.8px"></div><div class="l" style="left:122px;top:280.75px"><span class="k">"content"</span>: <span class="k">"111"</span>,</div>
<div class="ds" style="top:306.8px"></div><div class="l" style="left:122px;top:299.25px"><span class="k">"createTime"</span>: <span class="k">"2025-10-10 10:00:11"</span>,</div>
<div class="ds" style="top:325.8px"></div><div class="l" style="left:122px;top:317.75px"><span class="k">"applicantId"</span>: <span class="nu">98</span>,</div>
<div class="ds" style="top:343.8px"></div><div class="l" style="left:122px;top:336.25px"><span class="k">"applicantName"</span>: <span class="k">"<span class="c">德玛西亚账号</span>"</span>,</div>
<div class="ds" style="top:362.8px"></div><div class="l" style="left:122px;top:354.75px"><span class="k">"templateId"</span>: <span class="nu">117</span>,</div>
<div class="ds" style="top:380.8px"></div><div class="l" style="left:122px;top:373.25px"><span class="k">"templateName"</span>: <span class="k">"<span class="c">支出抄送</span>"</span>,</div>
<div class="ds" style="top:399.8px"></div><div class="l" style="left:122px;top:391.75px"><span class="k">"totalAmount"</span>: <span class="nu">10.00</span>,</div>
<div class="ds" style="top:417.8px"></div><div class="l" style="left:122px;top:410.25px"><span class="k">"attachments"</span>: [],</div>
<div class="ds" style="top:436.8px"></div><div class="l" style="left:122px;top:428.75px"><span class="k">"flowNodes"</span>: [</div>
<div class="ds" style="top:454.8px"></div><div class="l" style="left:150px;top:447.25px">{</div>
<div class="ds" style="top:473.8px"></div><div class="l" style="left:178px;top:465.75px"><span class="k">"nodeId"</span>: <span class="k">"start"</span>,</div>
<div class="ds" style="top:491.8px"></div><div class="l" style="left:178px;top:484.25px"><span class="k">"nodeName"</span>: <span class="k">"<span class="c">发起申请</span>"</span>,</div>
<div class="ds" style="top:510.8px"></div><div class="l" style="left:178px;top:502.75px"><span class="k">"nodeType"</span>: <span class="nu">1</span>,</div>
<div class="ds" style="top:528.8px"></div><div class="l" style="left:178px;top:521.25px"><span class="k">"nodeStatus"</span>: <span class="nu">2</span>,</div>
<div class="ds" style="top:547.8px"></div><div class="l" style="left:178px;top:539.75px"><span class="k">"nodeStatusName"</span>: <span class="k">"<span class="c">已完成</span>"</span>,</div>
<div class="ds" style="top:565.8px"></div><div class="l" style="left:178px;top:558.25px"><span class="k">"approverId"</span>: <span class="nu">98</span>,</div>
<div class="ds" style="top:584.8px"></div><div class="l" style="left:178px;top:576.75px"><span class="k">"approverName"</span>: <span class="k">"<span class="c">德玛西亚账号</span>"</span>,</div>
<div class="ds" style="top:602.8px"></div><div class="l" style="left:178px;top:595.25px"><span class="k">"comment"</span>: <span class="k">"<span class="c">发起审批申请</span>"</span>,</div>
<div class="ds" style="top:621.8px"></div><div class="l" style="left:178px;top:613.75px"><span class="k">"handleTime"</span>: <span class="k">"2025-10-10 10:00:11"</span>,</div>
<div class="ds" style="top:639.8px"></div><div class="l" style="left:178px;top:632.25px"><span class="k">"sortOrder"</span>: <span class="nu">0</span></div>
<div class="gd" style="left:62px;top:22.6px;height:625px;background:#a8c7fa"></div>
<div class="gd" style="left:90px;top:96.5px;height:551px"></div>
<div class="gd" style="left:118px;top:448px;height:200px"></div>
<div class="gd" style="left:146px;top:466.5px;height:181px"></div>
<div class="a" style="left:336.6px;top:577.8px;font-family:'Liberation Sans',sans-serif;font-size:21.5px;line-height:26px;letter-spacing:0;color:rgba(120,120,120,.48)">激活 Windows</div>
<div class="a" style="left:336.6px;top:604.3px;font-family:'Liberation Sans',sans-serif;font-size:15px;line-height:20px;letter-spacing:0;color:rgba(120,120,120,.48)">转到"设置"以激活 Windows。</div>
</div>
</div>
</body>
</html>
